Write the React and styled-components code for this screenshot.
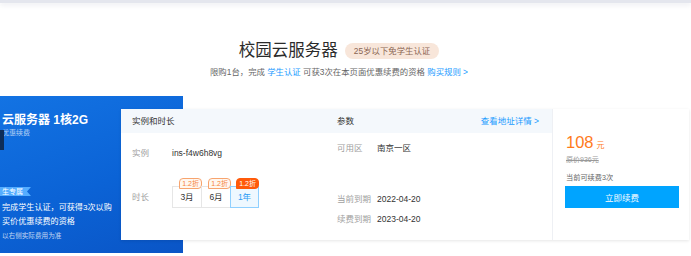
import React from "react";
import styled, { createGlobalStyle } from "styled-components";

const GlobalStyle = createGlobalStyle`
  html, body { margin: 0; padding: 0; background: #ffffff; }
  body {
    font-family: "Liberation Sans", "Noto Sans CJK SC", sans-serif;
    color: #333;
    overflow: hidden;
  }
  * { box-sizing: border-box; }
`;

const Page = styled.div`
  width: 691px;
  height: 256px;
  overflow: hidden;
`;

const TopBar = styled.div`
  height: 3px;
  background: #e4e6ee;
  box-shadow: 0 2px 5px rgba(120, 130, 160, 0.18);
`;

const Hero = styled.header`
  padding: 39px 13px 0 0;
  display: flex;
  flex-direction: column;
  align-items: center;
`;

const TitleRow = styled.div`
  display: flex;
  align-items: center;
  gap: 7px;
  height: 17px;
`;

const Title = styled.h1`
  margin: 0;
  font-size: 16.5px;
  line-height: 17px;
  font-weight: 400;
  color: #2b2b2b;
`;

const AgeBadge = styled.span`
  height: 16px;
  line-height: 16px;
  padding: 0 9px;
  border-radius: 8px;
  background: #f8e6da;
  color: #8a6552;
  font-size: 8.4px;
`;

const Subtitle = styled.p`
  margin: 7px 0 0;
  font-size: 8.4px;
  line-height: 12px;
  color: #666;
`;

const Link = styled.span`
  color: #1a9bff;
`;

const Main = styled.section`
  margin-top: 18px;
  display: grid;
  grid-template-columns: 121px 62px 506px 2px;
  grid-template-rows: auto;
`;

const Promo = styled.div`
  grid-column: 1 / 3;
  grid-row: 1;
  position: relative;
  height: 157px;
  padding: 17px 0 0 2px;
  background: linear-gradient(160deg, #1373e3 0%, #0b63d6 55%, #0a55c6 100%);
  color: #fff;
  display: flex;
  flex-direction: column;
  align-items: flex-start;
`;

const PromoTitle = styled.div`
  font-size: 12px;
  line-height: 14px;
  font-weight: 700;
  white-space: nowrap;
`;

const PromoNote = styled.div`
  margin-top: 1px;
  font-size: 7px;
  line-height: 9px;
  color: rgba(255, 255, 255, 0.7);
`;

const DarkTab = styled.div`
  position: absolute;
  left: 0;
  top: 34px;
  width: 4px;
  height: 20px;
  background: #0e2d58;
`;

const Ribbon = styled.div`
  margin: 50px 0 0 -2px;
  height: 9px;
  line-height: 9px;
  padding: 0 8px 0 2px;
  font-size: 7px;
  color: #fff;
  background: #55adff;
  clip-path: polygon(0 0, 100% 0, calc(100% - 4px) 50%, 100% 100%, 0 100%);
`;

const PromoText = styled.div`
  margin-top: 5px;
  font-size: 8.1px;
  line-height: 14px;
  white-space: nowrap;
`;

const PromoFoot = styled.div`
  margin-top: 2px;
  font-size: 6.6px;
  line-height: 9px;
  color: rgba(255, 255, 255, 0.75);
  white-space: nowrap;
`;

const Card = styled.div`
  grid-column: 2 / 4;
  grid-row: 1;
  position: relative;
  z-index: 1;
  margin-top: 13px;
  height: 131px;
  align-self: start;
  background: #fff;
  box-shadow: 0 1px 3px rgba(0, 0, 0, 0.1);
  display: grid;
  grid-template-columns: 431px 137px;
`;

const Detail = styled.div`
  display: flex;
  flex-direction: column;
`;

const Head = styled.div`
  height: 24px;
  background: #f4f8fc;
  display: grid;
  grid-template-columns: 216px 1fr;
  align-items: center;
  font-size: 8.5px;
  color: #333;
`;

const HeadCell = styled.div`
  padding-left: ${(p) => p.$pad || 0}px;
  padding-right: 13px;
  display: flex;
  justify-content: space-between;
  line-height: 12px;
`;

const Body = styled.div`
  display: grid;
  grid-template-columns: 216px 1fr;
`;

const Column = styled.div`
  padding: ${(p) => p.$top}px 0 0 ${(p) => p.$left}px;
  display: flex;
  flex-direction: column;
`;

const Field = styled.div`
  display: flex;
  align-items: center;
  margin-top: ${(p) => p.$gap || 0}px;
  font-size: 8.5px;
  line-height: 12px;
`;

const Label = styled.span`
  width: 40px;
  flex: none;
  color: #a0a0a0;
`;

const Value = styled.span`
  color: #333;
`;

const Options = styled.div`
  display: flex;
  margin-left: 1px;
`;

const Option = styled.div`
  position: relative;
  width: ${(p) => p.$w}px;
  height: 22px;
  margin-left: -1px;
  display: flex;
  align-items: center;
  justify-content: center;
  border: 1px solid ${(p) => (p.$active ? "#8fd0ff" : "#e6e6e6")};
  background: ${(p) => (p.$active ? "#eef8ff" : "#fff")};
  color: ${(p) => (p.$active ? "#2c9cf5" : "#333")};
  z-index: ${(p) => (p.$active ? 1 : 0)};
  font-size: 8.5px;
`;

const Discount = styled.span`
  position: absolute;
  right: -1px;
  top: -9px;
  height: 11px;
  padding: 0 2px;
  line-height: 9px;
  font-size: 7px;
  border: 1px solid ${(p) => (p.$active ? "#ff5a0a" : "#f7a46e")};
  border-radius: 4px 4px 4px 0;
  background: ${(p) => (p.$active ? "#ff5a0a" : "#fff7f0")};
  color: ${(p) => (p.$active ? "#fff" : "#f5843a")};
  white-space: nowrap;
`;

const PriceCol = styled.div`
  border-left: 1px solid #eef0f4;
  padding: 24px 11px 0 12px;
  display: flex;
  flex-direction: column;
`;

const PriceRow = styled.div`
  display: flex;
  align-items: baseline;
  gap: 3px;
  padding-left: 1px;
  color: #ff7a1a;
  line-height: 18px;
`;

const PriceNum = styled.span`
  font-size: 16.5px;
`;

const PriceUnit = styled.span`
  font-size: 8px;
`;

const Original = styled.div`
  padding-left: 1px;
  font-size: 7px;
  line-height: 10px;
  color: #999;
  text-decoration: line-through;
`;

const Remain = styled.div`
  margin-top: 8px;
  padding-left: 1px;
  font-size: 7.2px;
  line-height: 10px;
  color: #666;
`;

const RenewButton = styled.button`
  margin-top: 3px;
  width: 114px;
  height: 22px;
  border: none;
  background: #00a4ff;
  color: #fff;
  font-family: inherit;
  font-size: 8.5px;
  padding: 0;
  cursor: pointer;
`;

const durations = [
  { label: "3月", w: 30 },
  { label: "6月", w: 30 },
  { label: "1年", w: 29, active: true },
];

export default function App() {
  return (
    <Page>
      <GlobalStyle />
      <TopBar />
      <Hero>
        <TitleRow>
          <Title>校园云服务器</Title>
          <AgeBadge>25岁以下免学生认证</AgeBadge>
        </TitleRow>
        <Subtitle>
          限购1台，完成 <Link>学生认证</Link> 可获3次在本页面优惠续费的资格 <Link>购买规则 &gt;</Link>
        </Subtitle>
      </Hero>
      <Main>
        <Promo>
          <DarkTab />
          <PromoTitle>云服务器 1核2G</PromoTitle>
          <PromoNote>优惠续费</PromoNote>
          <Ribbon>生专属</Ribbon>
          <PromoText>
            完成学生认证，可获得3次以购
            <br />
            买价优惠续费的资格
          </PromoText>
          <PromoFoot>以右侧实际费用为准</PromoFoot>
        </Promo>
        <Card>
          <Detail>
            <Head>
              <HeadCell $pad={11}>实例和时长</HeadCell>
              <HeadCell>
                <span>参数</span>
                <Link>查看地址详情 &gt;</Link>
              </HeadCell>
            </Head>
            <Body>
              <Column $top={14} $left={11}>
                <Field>
                  <Label>实例</Label>
                  <Value>ins-f4w6h8vg</Value>
                </Field>
                <Field $gap={27}>
                  <Label>时长</Label>
                  <Options>
                    {durations.map((d) => (
                      <Option key={d.label} $w={d.w} $active={d.active}>
                        {d.label}
                        <Discount $active={d.active}>1.2折</Discount>
                      </Option>
                    ))}
                  </Options>
                </Field>
              </Column>
              <Column $top={9} $left={0}>
                <Field>
                  <Label>可用区</Label>
                  <Value>南京一区</Value>
                </Field>
                <Field $gap={39}>
                  <Label>当前到期</Label>
                  <Value>2022-04-20</Value>
                </Field>
                <Field $gap={8}>
                  <Label>续费到期</Label>
                  <Value>2023-04-20</Value>
                </Field>
              </Column>
            </Body>
          </Detail>
          <PriceCol>
            <PriceRow>
              <PriceNum>108</PriceNum>
              <PriceUnit>元</PriceUnit>
            </PriceRow>
            <Original>原价936元</Original>
            <Remain>当前可续费3次</Remain>
            <RenewButton>立即续费</RenewButton>
          </PriceCol>
        </Card>
      </Main>
    </Page>
  );
}
